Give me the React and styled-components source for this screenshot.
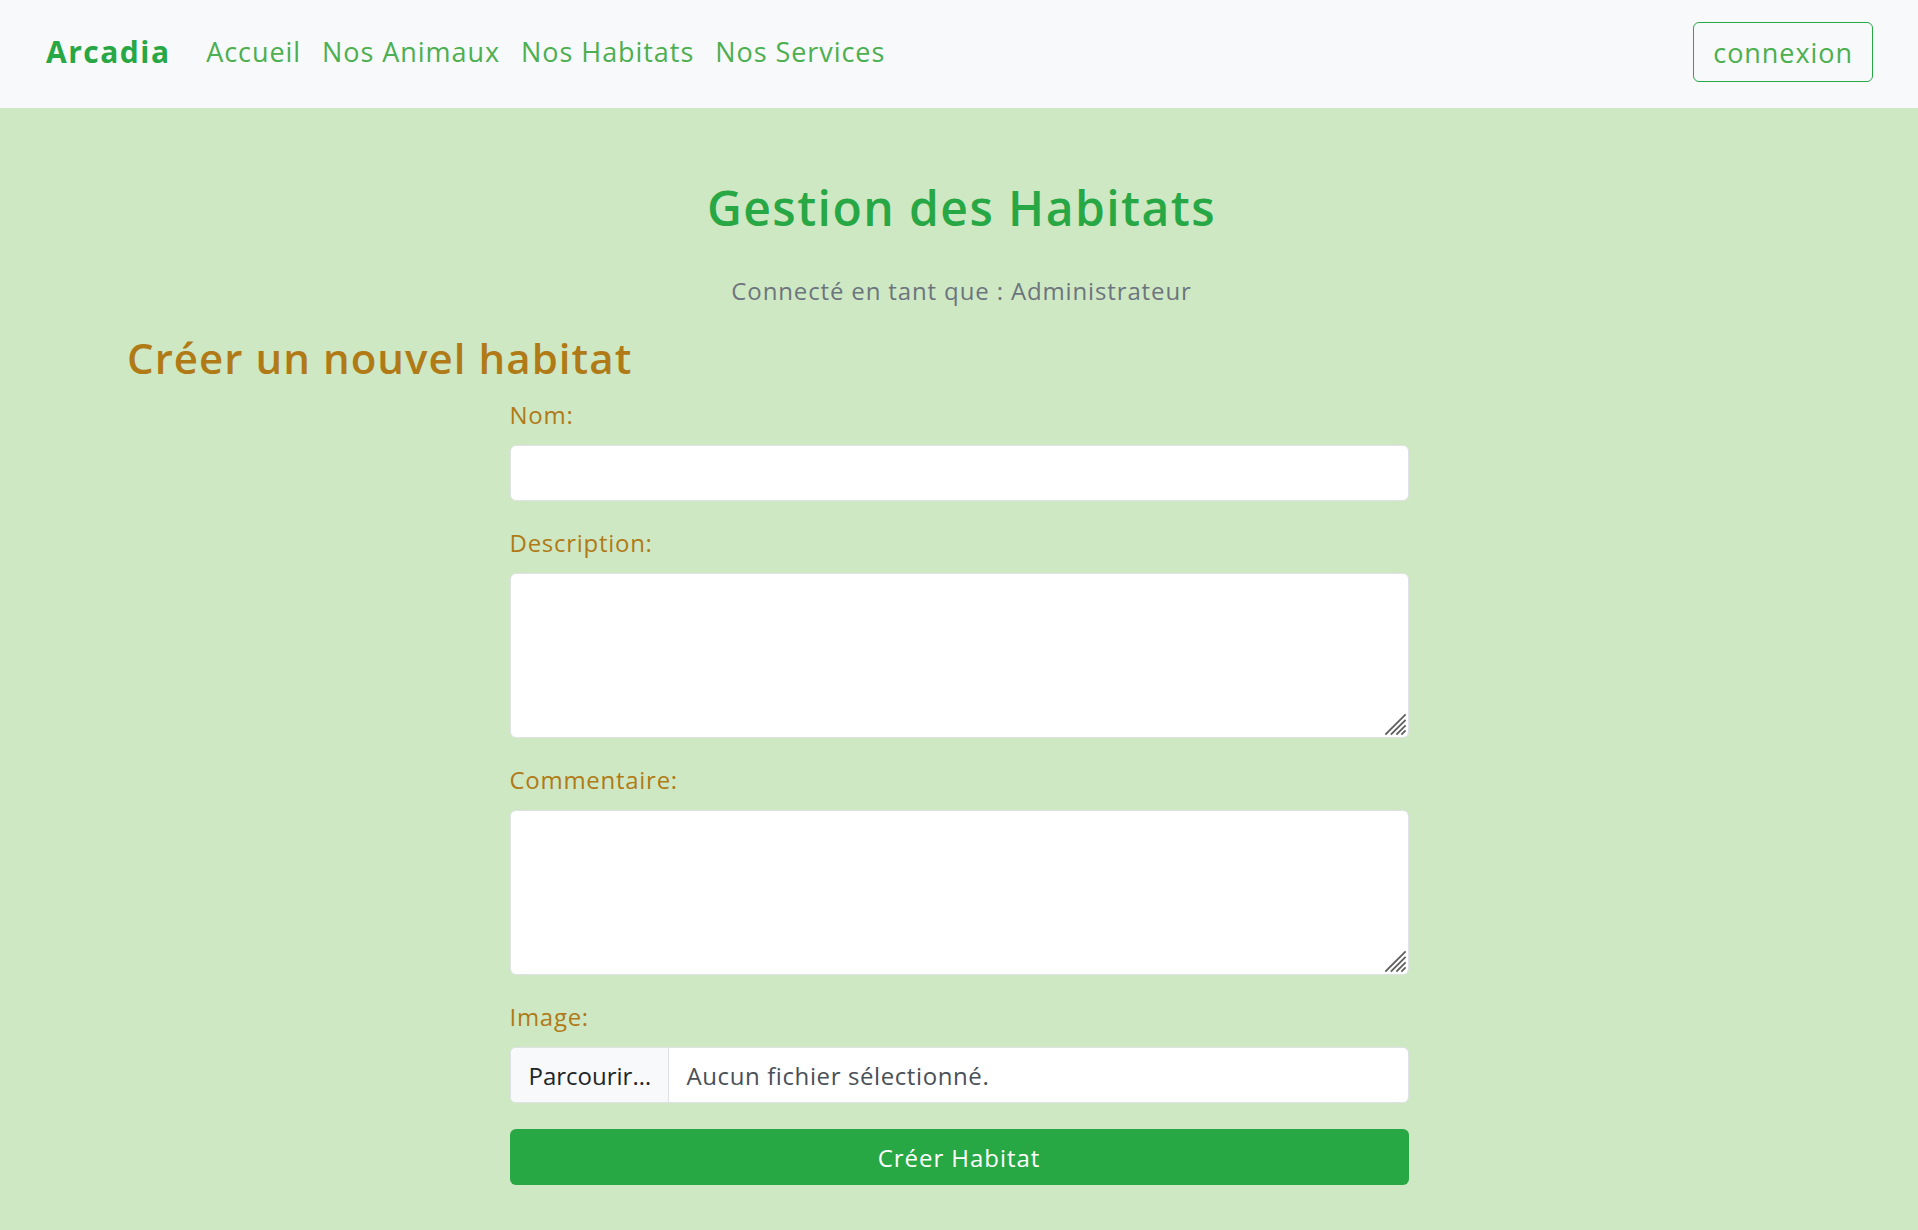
import React, { useState } from 'react';
import styled, { createGlobalStyle } from 'styled-components';

const GlobalStyle = createGlobalStyle`
  html, body {
    margin: 0;
    padding: 0;
  }
  body {
    font-family: "Open Sans", "Liberation Sans", sans-serif;
    background: #cfe8c4;
    color: #212529;
  }
  * {
    box-sizing: border-box;
  }
`;

const navLinks = ['Accueil', 'Nos Animaux', 'Nos Habitats', 'Nos Services'];

// little diagonal grip drawn over the textarea corner (bigger than chrome's default)
const Grip = () => (
  <GripIcon width="24" height="24" viewBox="0 0 24 24" aria-hidden="true">
    <polygon points="24,0 24,24 0,24" fill="#fff" />
    <g stroke="#5f5f5f" strokeWidth="1.8" strokeLinecap="square">
      <line x1="3" y1="22" x2="22" y2="3" />
      <line x1="8.5" y1="22" x2="22" y2="8.5" />
      <line x1="14" y1="22" x2="22" y2="14" />
      <line x1="19" y1="22" x2="22" y2="19" />
    </g>
  </GripIcon>
);

function App() {
  const [nom, setNom] = useState('');
  const [description, setDescription] = useState('');
  const [commentaire, setCommentaire] = useState('');
  const [fileName, setFileName] = useState('');

  const handleFile = e => {
    const file = e.target.files && e.target.files[0];
    setFileName(file ? file.name : '');
  };

  return (
    <>
      <GlobalStyle />
      <Navbar>
        <Brand href="#">Arcadia</Brand>
        <NavList>
          {navLinks.map(link => (
            <NavLink key={link} href="#">{link}</NavLink>
          ))}
        </NavList>
        <LoginButton type="button">connexion</LoginButton>
      </Navbar>

      <Main>
        <Title>Gestion des Habitats</Title>
        <Subtitle>Connecté en tant que : Administrateur</Subtitle>

        <SectionTitle>Créer un nouvel habitat</SectionTitle>

        <Form onSubmit={e => e.preventDefault()}>
          <Field>
            <Label htmlFor="nom">Nom:</Label>
            <Input id="nom" value={nom} onChange={e => setNom(e.target.value)} />
          </Field>
          <Field>
            <Label htmlFor="description">Description:</Label>
            <AreaWrap>
              <TextArea
                id="description"
                value={description}
                onChange={e => setDescription(e.target.value)}
              />
              <Grip />
            </AreaWrap>
          </Field>
          <Field>
            <Label htmlFor="commentaire">Commentaire:</Label>
            <AreaWrap>
              <TextArea
                id="commentaire"
                value={commentaire}
                onChange={e => setCommentaire(e.target.value)}
              />
              <Grip />
            </AreaWrap>
          </Field>
          <Field $last>
            <Label htmlFor="image">Image:</Label>
            <FileBox>
              <HiddenFile id="image" type="file" onChange={handleFile} />
              <FileButton>Parcourir…</FileButton>
              <FileName>{fileName || 'Aucun fichier sélectionné.'}</FileName>
            </FileBox>
          </Field>
          <SubmitButton type="submit">Créer Habitat</SubmitButton>
        </Form>
      </Main>
    </>
  );
}

const Navbar = styled.nav`
  display: flex;
  align-items: center;
  height: 108px;
  padding: 0 45px 6px 46px;
  background: #f8f9fa;
`;

const Brand = styled.a`
  font-size: 30px;
  font-weight: 700;
  color: #28a745;
  text-decoration: none;
  margin-right: 25px;
  letter-spacing: 0.05em;
`;

const NavList = styled.div`
  display: flex;
  flex: 1;
`;

const NavLink = styled.a`
  padding: 0 10.5px;
  font-size: 27px;
  letter-spacing: 0.035em;
  color: #4caf50;
  text-decoration: none;
`;

const LoginButton = styled.button`
  height: 60px;
  margin-top: 2px;
  padding: 0 19px;
  font-family: inherit;
  font-size: 27px;
  letter-spacing: 0.035em;
  color: #4caf50;
  background: transparent;
  border: 1.5px solid #28a745;
  border-radius: 6px;
`;

const Main = styled.main`
  max-width: 1710px;
  margin: 0 auto;
  padding: 64px 18px 38px 23px;
`;

const Title = styled.h1`
  margin: 0;
  text-align: center;
  font-size: 48px;
  font-weight: 600;
  line-height: 72px;
  letter-spacing: 0.03em;
  color: #28a745;
`;

const Subtitle = styled.p`
  margin: 29px 0 0;
  text-align: center;
  font-size: 24px;
  line-height: 36px;
  letter-spacing: 0.036em;
  color: #6c757d;
`;

const SectionTitle = styled.h3`
  margin: 24px 0 14px;
  font-size: 42px;
  font-weight: 600;
  line-height: 50px;
  letter-spacing: 0.025em;
  color: #b07a16;
`;

const Form = styled.form`
  width: 899px;
  margin: 0 auto;
  position: relative;
  left: -2.5px;
`;

const Field = styled.div`
  margin-bottom: ${p => (p.$last ? '26px' : '24px')};
`;

const Label = styled.label`
  display: block;
  margin-bottom: 12px;
  font-size: 24px;
  line-height: 36px;
  letter-spacing: 0.03em;
  color: #b07a16;
`;

const Input = styled.input`
  display: block;
  width: 100%;
  height: 56px;
  padding: 9px 18px;
  font-family: inherit;
  font-size: 24px;
  background: #fff;
  border: 1.5px solid #dee2e6;
  border-radius: 6px;
  outline: none;
`;

const AreaWrap = styled.div`
  position: relative;
`;

const TextArea = styled.textarea`
  display: block;
  width: 100%;
  height: 165px;
  padding: 9px 18px;
  font-family: inherit;
  font-size: 24px;
  background: #fff;
  border: 1.5px solid #dee2e6;
  border-radius: 6px;
  resize: vertical;
  outline: none;
`;

const GripIcon = styled.svg`
  position: absolute;
  right: 2px;
  bottom: 2px;
  pointer-events: none;
`;

const FileBox = styled.label`
  display: flex;
  height: 56px;
  background: #fff;
  border: 1.5px solid #dee2e6;
  border-radius: 6px;
  overflow: hidden;
  cursor: pointer;
`;

const HiddenFile = styled.input`
  display: none;
`;

const FileButton = styled.span`
  display: flex;
  align-items: center;
  width: 158px;
  padding: 0 18px;
  font-size: 24px;
  color: #212529;
  background: #f8f9fa;
  border-right: 1.5px solid #dee2e6;
  white-space: nowrap;
`;

const FileName = styled.span`
  display: flex;
  align-items: center;
  padding: 0 18px;
  font-size: 24px;
  letter-spacing: 0.025em;
  color: #495057;
`;

const SubmitButton = styled.button`
  display: block;
  width: 100%;
  height: 56px;
  font-family: inherit;
  font-size: 24px;
  letter-spacing: 0.04em;
  color: #fff;
  background: #28a745;
  border: none;
  border-radius: 6px;
`;

export default App;
